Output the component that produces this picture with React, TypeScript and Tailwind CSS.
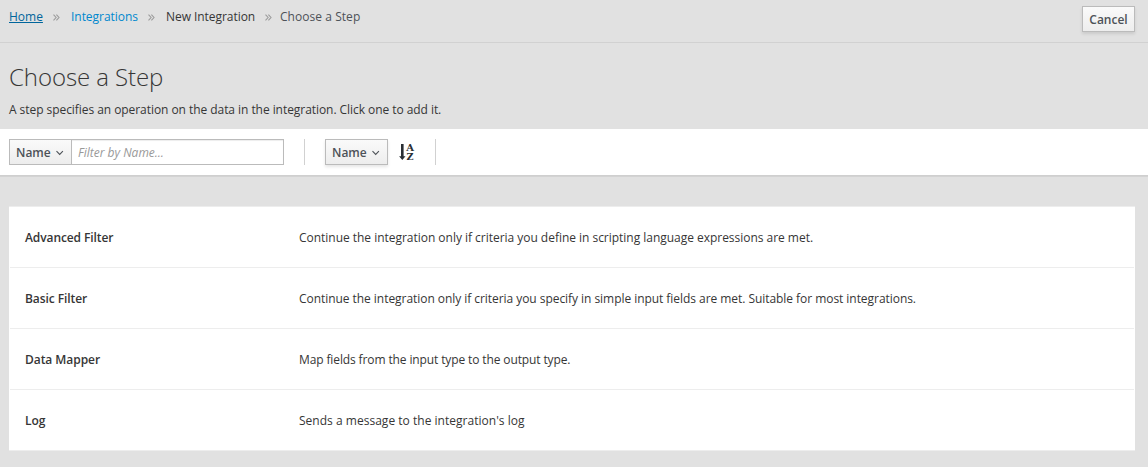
import React from "react";

const steps = [
  { name: "Advanced Filter", nameClass: "tracking-[-0.1px]", description: "Continue the integration only if criteria you define in scripting language expressions are met.", textClass: "tracking-[-0.026px]" },
  { name: "Basic Filter", nameClass: "tracking-[-0.08px]", description: "Continue the integration only if criteria you specify in simple input fields are met. Suitable for most integrations.", textClass: "tracking-[-0.05px]" },
  { name: "Data Mapper", nameClass: "tracking-[-0.05px]", description: "Map fields from the input type to the output type.", textClass: "tracking-[-0.12px]" },
  { name: "Log", nameClass: "tracking-normal", description: "Sends a message to the integration's log", textClass: "tracking-[0.02px]" },
];

function Separator({ className }: { className: string }) {
  return (
    <span className={`flex h-5 items-center pt-px ${className}`}>
      <svg width="7" height="7" viewBox="0 0 7 7" fill="none" stroke="#9c9c9c" strokeWidth="1.1">
        <path d="M.5.7 3.1 3.5.5 6.3M3.4.7 6 3.5 3.4 6.3" />
      </svg>
    </span>
  );
}

function Caret() {
  return (
    <svg className="ml-[5px]" width="8" height="6" viewBox="0 0 8 6" fill="none" stroke="#4d5258" strokeWidth="1.1">
      <path d="m.5 1.2 3.2 3.2 3.2-3.2" />
    </svg>
  );
}

function SortIcon() {
  return (
    <svg width="16" height="18" viewBox="0 0 16 18" fill="#292e34">
      <path d="M2 1h2.6v12.3h1.9L3.3 17 .1 13.3H2z" />
      <g className="font-['DejaVu_Serif',serif] text-[9.5px] font-bold" textAnchor="middle">
        <text x="11.2" y="8" textLength="7.8" lengthAdjust="spacingAndGlyphs">A</text>
        <text x="11.1" y="17" textLength="7" lengthAdjust="spacingAndGlyphs">Z</text>
      </g>
    </svg>
  );
}

export default function App() {
  return (
    <div className="flex h-[467px] w-[1148px] flex-col bg-[#e1e1e1] font-['Open_Sans',sans-serif] text-[12px] leading-5 text-[#363636]">
      <header className="flex h-[43px] shrink-0 items-start justify-between border-b border-[#d1d1d1] pt-[6px] pr-[13px] pl-[9px]">
        <nav className="flex pt-px">
          <a className="w-[34px] text-[#00659c] underline">Home</a>
          <Separator className="w-[28px] pl-[10px]" />
          <a className="w-[67px] tracking-[-0.04px] whitespace-nowrap text-[#0088ce]">Integrations</a>
          <Separator className="w-[28px] pl-[10px]" />
          <span className="w-[89px] tracking-[-0.05px] whitespace-nowrap">New Integration</span>
          <Separator className="w-[25px] pl-[10px]" />
          <span className="tracking-[0.05px] text-[#4d5258]">Choose a Step</span>
        </nav>
        <button className="h-[26px] w-[53px] border border-[#bbb] bg-linear-to-b from-[#fafafa] to-[#ededed] pt-px font-semibold text-[#4d5258] shadow-[0_2px_3px_rgba(3,3,3,0.1)]">Cancel</button>
      </header>
      <section className="h-[86px] shrink-0 pt-[21px] pl-[9px]">
        <h1 className="text-[24px] leading-[26px] font-light tracking-[-0.08px]">Choose a Step</h1>
        <p className="mt-[10px] tracking-[-0.056px]">A step specifies an operation on the data in the integration. Click one to add it.</p>
      </section>
      <div className="flex h-[46px] shrink-0 bg-white pt-[10px] pl-[9px] shadow-[0_1px_0_#cfcfcf,0_2px_0_#d3d3d3]">
        <button className="flex h-[26px] w-[63px] items-center border border-[#bbb] bg-linear-to-b from-[#fafafa] to-[#ededed] pt-px pl-[6px] font-semibold text-[#4d5258]">
          Name <Caret />
        </button>
        <input className="-ml-px h-[26px] w-[213px] border border-[#bbb] px-[6px] shadow-[inset_0_1px_1px_rgba(3,3,3,0.075)] placeholder:text-[#999] placeholder:italic" placeholder="Filter by Name..." />
        <div className="ml-5 h-[26px] w-px bg-[#d1d1d1]" />
        <button className="ml-5 flex h-[26px] w-[63px] items-center border border-[#bbb] bg-linear-to-b from-[#fafafa] to-[#ededed] pt-px pl-[6px] font-semibold text-[#4d5258] shadow-[0_2px_3px_rgba(3,3,3,0.1)]">
          Name <Caret />
        </button>
        <div className="mt-[4px] ml-[11px]"><SortIcon /></div>
        <div className="ml-[20px] h-[26px] w-px bg-[#d1d1d1]" />
      </div>
      <ul className="mt-[31px] mr-[13px] ml-[9px] border-t border-[#ededed] bg-white">
        {steps.map(({ name, nameClass, description, textClass }) => (
          <li key={name} className="mx-px flex h-[61px] items-center border-b border-[#ededed] pt-px pl-[15px] last:mx-0 last:pl-4">
            <span className={`w-[274px] font-semibold ${nameClass}`}>{name}</span>
            <span className={textClass}>{description}</span>
          </li>
        ))}
      </ul>
    </div>
  );
}
